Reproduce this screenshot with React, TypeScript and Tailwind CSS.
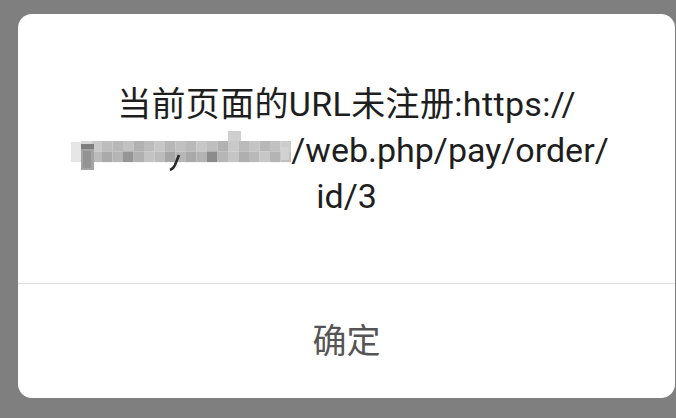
import React from "react";

const band: string[][] = [
  ["#d8d8d8","#c9c9c9","#bdbdbd","#b8b8b8","#c2c2c2","#b2b2b2","#bcbcbc","#c6c6c6","#b7b7b7","#c0c0c0","#b9b9b9","#c7c7c7","#bebebe","#b1b1b1","#c9c9c9","#bababa","#c4c4c4","#b8b8b8","#c1c1c1","#cccccc"],
  ["#dadada","#bbbbbb","#aaaaaa","#b5b5b5","#969696","#b0b0b0","#c3c3c3","#bcbcbc","#a6a6a6","#b7b7b7","#a9a9a9","#b3b3b3","#8c8c8c","#b6b6b6","#c5c5c5","#afafaf","#b9b9b9","#c7c7c7","#b4b4b4","#bfbfbf"],
];

function Mosaic() {
  return (
    <svg width="220" height="46" viewBox="0 0 220 46" className="block shrink-0">
      <rect x="0" y="15" width="10" height="20" fill="#e6e6e6" />
      {band.map((row, r) =>
        row.map((c, i) => (
          <rect key={`${r}-${i}`} x={10 + i * 10.5} y={14 + r * 10.5} width="10.6" height="10.6" fill={c} />
        ))
      )}
      <rect x="157" y="4" width="13" height="10" fill="#cfcfcf" />
      <rect x="10" y="17" width="13" height="26" fill="#a4a4a4" />
      <rect x="10" y="17" width="13" height="5" fill="#7e7e7e" />
      <rect x="12" y="24" width="8" height="17" fill="#939393" />
      <path d="M108 28 L104 38 Q102 42 99 43" stroke="#2a2a2a" strokeWidth="2.6" fill="none" />
      <rect x="210" y="20" width="8" height="13" fill="#d2d2d2" />
    </svg>
  );
}

export default function App() {
  const font = { fontFamily: 'Roboto, "Noto Sans CJK SC", sans-serif' };
  return (
    <div className="w-[676px] h-[418px] bg-[#7f7f7f] pt-[14px] pl-[18px]" style={font}>
      <div className="w-[657px] h-[384px] bg-white rounded-[14px] flex flex-col overflow-hidden">
        <div className="h-[269px] pt-[67px] flex flex-col items-center text-[34px] leading-[46px] text-[#1e1e1e]">
          <div className="h-[46px] whitespace-nowrap tracking-[0.35px]">当前页面的URL未注册:https://</div>
          <div className="h-[46px] flex items-start whitespace-nowrap pr-[13px]">
            <Mosaic />
            <span>/web.php/pay/order/</span>
          </div>
          <div className="h-[46px] whitespace-nowrap">id/3</div>
        </div>
        <div className="border-t border-[#dcdcdc]" />
        <div className="flex-1 flex items-center justify-center text-[34px] text-[#555555]">
          <span className="leading-none">确定</span>
        </div>
      </div>
    </div>
  );
}
